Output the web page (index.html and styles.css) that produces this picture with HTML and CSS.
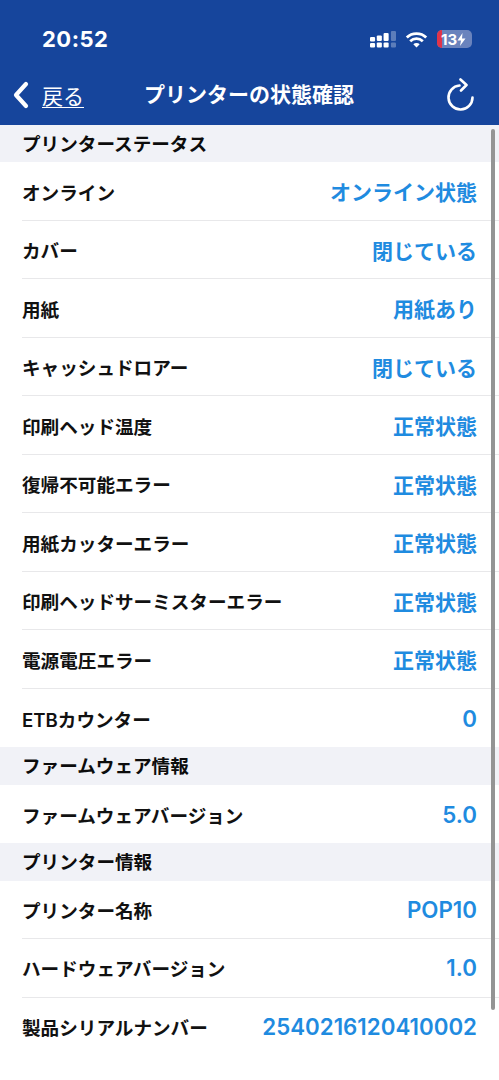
FILE: index.html
```html
<!DOCTYPE html>
<html lang="ja">
<head>
<meta charset="utf-8">
<title>プリンターの状態確認</title>
<link rel="stylesheet" href="styles.css">
</head>
<body>
<div class="screen">
  <header class="header">
    <div class="status">
      <span class="time">20:52</span>
      <div class="status-icons">
        <svg class="signal" width="26" height="17" viewBox="0 0 23 17" preserveAspectRatio="none">
          <g fill="#fff"><rect x="0" y="6" width="4.500" height="4.500" rx="1"/><rect x="0" y="12" width="4.500" height="4.500" rx="1"/><rect x="6" y="4.500" width="4.500" height="5.500" rx="1"/><rect x="6" y="11.500" width="4.500" height="5" rx="1"/><rect x="12" y="2" width="4.500" height="8" rx="1"/><rect x="12" y="11.500" width="4.500" height="5" rx="1"/></g>
          <g fill="#fff" opacity=".3"><rect x="18.500" y="0" width="4.500" height="10" rx="1"/><rect x="18.500" y="11.500" width="4.500" height="5" rx="1"/></g>
        </svg>
        <svg class="wifi" width="23" height="17" viewBox="0 0 23 17">
          <path d="M1.800 6.500C7 1.300 16 1.300 21.200 6.500M5.200 10.200C8.800 6.800 14.200 6.800 17.800 10.200" fill="none" stroke="#fff" stroke-width="2.800"/>
          <path d="M8.300 13.200C10.200 11.700 12.800 11.700 14.700 13.200L11.500 16.500Z" fill="#fff"/>
        </svg>
        <div class="battery"><span class="battery-low"></span><span class="battery-text">13</span><svg class="bolt" width="9" height="13" viewBox="0 0 9 13"><path d="M5.500 0L0.500 7.500H4L3 13L8.500 5.500H5Z" fill="#fff"/></svg></div>
      </div>
    </div>
    <nav class="nav">
      <a class="back">
        <svg width="18" height="28" viewBox="0 0 18 28"><path d="M14 3L4 14L14 25" fill="none" stroke="#fff" stroke-width="4.200" stroke-linecap="round" stroke-linejoin="round"/></svg>
        <span class="back-label">戻る</span>
      </a>
      <h1 class="title">プリンターの状態確認</h1>
      <svg class="reload" width="28" height="34" viewBox="0 0 28 34"><path d="M13.500 7.500A12 12 0 1 0 26.500 19.500" fill="none" stroke="#fff" stroke-width="2.600" stroke-linecap="round"/><path d="M14.500 1.500L20.500 7L15 12.500" fill="none" stroke="#fff" stroke-width="2.600" stroke-linecap="round" stroke-linejoin="round"/></svg>
    </nav>
  </header>
  <main class="content">
    <h2 class="section">プリンターステータス</h2>
    <div class="row"><span class="label">オンライン</span><span class="value">オンライン状態</span></div>
    <div class="row"><span class="label">カバー</span><span class="value">閉じている</span></div>
    <div class="row"><span class="label">用紙</span><span class="value">用紙あり</span></div>
    <div class="row"><span class="label">キャッシュドロアー</span><span class="value">閉じている</span></div>
    <div class="row"><span class="label">印刷ヘッド温度</span><span class="value">正常状態</span></div>
    <div class="row"><span class="label">復帰不可能エラー</span><span class="value">正常状態</span></div>
    <div class="row"><span class="label">用紙カッターエラー</span><span class="value">正常状態</span></div>
    <div class="row"><span class="label">印刷ヘッドサーミスターエラー</span><span class="value">正常状態</span></div>
    <div class="row"><span class="label">電源電圧エラー</span><span class="value">正常状態</span></div>
    <div class="row last"><span class="label">ETBカウンター</span><span class="value num">0</span></div>
    <h2 class="section">ファームウェア情報</h2>
    <div class="row last"><span class="label">ファームウェアバージョン</span><span class="value num">5.0</span></div>
    <h2 class="section">プリンター情報</h2>
    <div class="row"><span class="label">プリンター名称</span><span class="value num">POP10</span></div>
    <div class="row"><span class="label">ハードウェアバージョン</span><span class="value num">1.0</span></div>
    <div class="row last"><span class="label">製品シリアルナンバー</span><span class="value num">2540216120410002</span></div>
  </main>
  <div class="scrollbar"></div>
</div>
</body>
</html>
```
FILE: styles.css
```css
* { box-sizing: border-box; margin: 0; padding: 0; }
html, body { background: #fff; }
body { font-family: Inter, "Noto Sans CJK JP", sans-serif; }
.screen { position: relative; width: 499px; height: 1080px; overflow: hidden; background: #fff; }
.header { height: 125px; background: #16459c; color: #fff; display: flex; flex-direction: column; }
.status { height: 75px; display: flex; justify-content: space-between; align-items: center; padding: 3px 27px 0 42px; }
.time { font-size: 22px; font-weight: 700; letter-spacing: .5px; }
.status-icons { display: flex; align-items: center; gap: 9px; }
.battery { position: relative; width: 35px; height: 18px; border-radius: 5px; background: #6a83bd; overflow: hidden; display: flex; align-items: center; padding-left: 4px; }
.battery-low { position: absolute; left: 0; top: 0; bottom: 0; width: 5px; background: #e0344a; }
.battery-text { position: relative; font-size: 15px; font-weight: 700; color: #fff; }
.bolt { position: relative; flex: none; }
.nav { height: 50px; position: relative; display: flex; align-items: center; justify-content: space-between; padding: 0 25px 10px 12px; }
.back { display: flex; align-items: center; gap: 12px; }
.back-label { font-size: 21px; text-decoration: underline; text-underline-offset: 3px; text-decoration-thickness: 1px; }
.title { font-size: 21px; font-weight: 700; position: absolute; left: 144px; top: 0; line-height: 40px; }
.section { height: 37.400px; background: #f1f2f7; color: #0c0c0c; font-size: 18.600px; font-weight: 600; line-height: 38px; padding-left: 22px; }
.row { height: 58.500px; margin-left: 22px; padding-right: 22px; display: flex; justify-content: space-between; align-items: center; border-bottom: 1px solid #e8e8ea; }
.row.last { border-bottom: none; }
.label { font-size: 18.600px; font-weight: 600; color: #111; }
.value { font-size: 21px; font-weight: 600; color: #1f8be0; }
.value.num { font-size: 22.300px; }
.scrollbar { position: absolute; left: 491px; top: 129px; width: 4px; height: 881px; border-radius: 2px; background: #949494; }
```
